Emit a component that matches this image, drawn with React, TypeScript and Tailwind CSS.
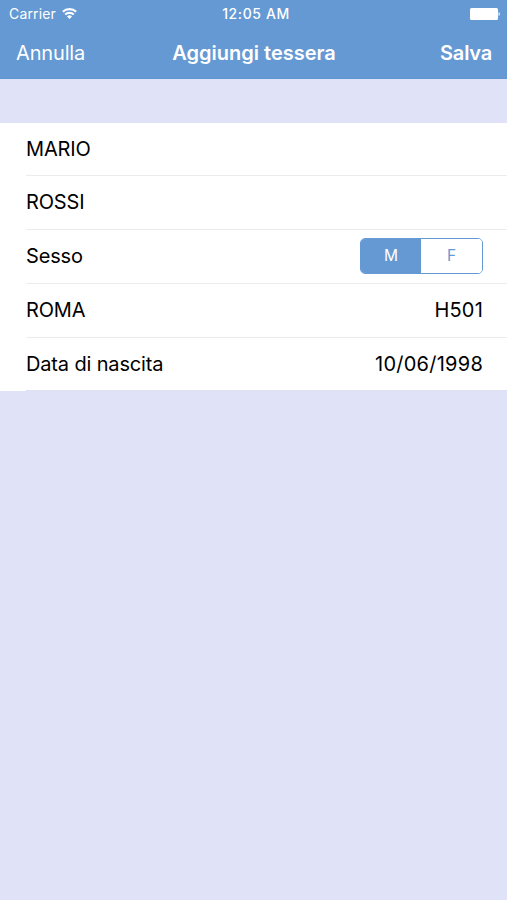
import type { ReactNode } from "react";

function StatusBar() {
  return (
    <div className="grid h-[27px] grid-cols-[1fr_auto_1fr] items-center pl-[9px] pr-1.5 text-[14px] text-white">
      <div className="flex items-center gap-1.5">
        <span className="tracking-[0.15px]">Carrier</span>
        <svg width="15" height="11" viewBox="0 0 15 11" fill="none" stroke="currentColor" strokeWidth="2.1">
          <path d="M.8 3.8a9.6 9.6 0 0 1 13.4 0" />
          <path d="M3.2 6.6a6.1 6.1 0 0 1 8.6 0" />
          <path d="M7.5 11 5 8.6a3.5 3.5 0 0 1 5 0z" fill="currentColor" stroke="none" />
        </svg>
      </div>
      <div className="pl-0.5 text-center font-medium tracking-[0.6px]">12:05 AM</div>
      <div className="flex items-center justify-end">
        <svg width="31" height="12" viewBox="0 0 31 12" fill="currentColor">
          <rect width="28" height="12" rx="1.5" />
          <path d="M28.6 4v4a2.2 2.2 0 0 0 0-4z" />
        </svg>
      </div>
    </div>
  );
}

function NavBar() {
  return (
    <div className="grid h-[51px] grid-cols-[1fr_auto_1fr] items-center pl-4 pr-[15px] text-[20px] text-white">
      <button className="text-left tracking-[-0.15px]">Annulla</button>
      <h1 className="font-semibold">Aggiungi tessera</h1>
      <button className="text-right font-semibold tracking-[-0.2px]">Salva</button>
    </div>
  );
}

function Row({ label, children }: { label: string; children?: ReactNode }) {
  return (
    <div className="ml-[26px] flex h-[54px] items-center justify-between border-b border-[#ececef] pr-6 pb-px first:h-[53px] last:h-[53px] last:border-[#dde2f3] last:pb-0">
      <span>{label}</span>
      {children}
    </div>
  );
}

function SexToggle() {
  return (
    <div className="flex h-[36px] w-[123px] overflow-hidden rounded-[5px] border border-[#6499d3] text-[15.5px]">
      <button className="w-[60px] bg-[#6499d3] text-white">M</button>
      <button className="flex-1 bg-white text-[#6499d3]">F</button>
    </div>
  );
}

export default function App() {
  return (
    <div className="min-h-screen bg-[#e0e3f7] font-['Inter','Liberation_Sans',sans-serif]">
      <header className="h-[79px] border-b border-[#5e96d2] bg-[#6499d3]">
        <StatusBar />
        <NavBar />
      </header>
      <main className="mt-11 bg-white text-[20px] tracking-[-0.15px] text-black">
        <Row label="MARIO" />
        <Row label="ROSSI" />
        <Row label="Sesso">
          <SexToggle />
        </Row>
        <Row label="ROMA">
          <span className="tracking-[0.2px]">H501</span>
        </Row>
        <Row label="Data di nascita">
          <span className="tracking-[0.25px]">10/06/1998</span>
        </Row>
      </main>
    </div>
  );
}
